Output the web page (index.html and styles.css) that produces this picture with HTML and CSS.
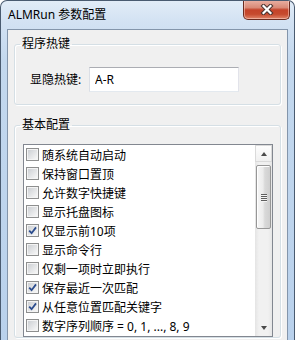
FILE: index.html
```html
<!DOCTYPE html>
<html lang="zh-CN">
<head>
<meta charset="utf-8">
<title>ALMRun 参数配置</title>
<link rel="stylesheet" href="styles.css">
</head>
<body>
<div class="window">
  <div class="titlebar">
    <span class="title">ALMRun 参数配置</span>
    <button class="close" aria-label="关闭">
      <svg width="14" height="11" viewBox="0 0 14 11">
        <path d="M3.5 2 L10.5 9 M10.5 2 L3.5 9" stroke="#4a3430" stroke-width="4.2" stroke-linecap="square" fill="none"/>
        <path d="M3.5 2 L10.5 9 M10.5 2 L3.5 9" stroke="#ffffff" stroke-width="2.2" stroke-linecap="square" fill="none"/>
      </svg>
    </button>
  </div>
  <div class="client">
    <fieldset class="group hotkey">
      <legend>程序热键</legend>
      <div class="row">
        <label class="label" for="hk">显隐热键:</label>
        <input id="hk" class="textbox" type="text" value="A-R">
      </div>
    </fieldset>
    <fieldset class="group basic">
      <legend>基本配置</legend>
      <div class="listbox">
        <ul class="items">
          <li class="item"><span class="cb"></span><span>随系统自动启动</span></li>
          <li class="item"><span class="cb"></span><span>保持窗口置顶</span></li>
          <li class="item"><span class="cb"></span><span>允许数字快捷键</span></li>
          <li class="item"><span class="cb"></span><span>显示托盘图标</span></li>
          <li class="item"><span class="cb checked"><svg width="9" height="9" viewBox="0 0 9 9"><path d="M1.2 4.6 L3.6 7.2 L8 1.4" stroke="#2c4d8e" stroke-width="1.8" fill="none"/></svg></span><span>仅显示前10项</span></li>
          <li class="item"><span class="cb"></span><span>显示命令行</span></li>
          <li class="item"><span class="cb"></span><span>仅剩一项时立即执行</span></li>
          <li class="item"><span class="cb checked"><svg width="9" height="9" viewBox="0 0 9 9"><path d="M1.2 4.6 L3.6 7.2 L8 1.4" stroke="#2c4d8e" stroke-width="1.8" fill="none"/></svg></span><span>保存最近一次匹配</span></li>
          <li class="item"><span class="cb checked"><svg width="9" height="9" viewBox="0 0 9 9"><path d="M1.2 4.6 L3.6 7.2 L8 1.4" stroke="#2c4d8e" stroke-width="1.8" fill="none"/></svg></span><span>从任意位置匹配关键字</span></li>
          <li class="item"><span class="cb"></span><span>数字序列顺序 = 0, 1, ..., 8, 9</span></li>
        </ul>
        <div class="scrollbar">
          <div class="sb-btn sb-up"><span class="arrow-up"></span></div>
          <div class="sb-thumb"><span class="grip"></span><span class="grip"></span><span class="grip"></span><span class="grip"></span></div>
          <div class="sb-btn sb-down"><span class="arrow-down"></span></div>
        </div>
      </div>
    </fieldset>
  </div>
</div>
</body>
</html>
```
FILE: styles.css
```css
html, body {
  margin: 0;
  padding: 0;
}
body {
  width: 295px;
  height: 340px;
  overflow: hidden;
  background: #ffffff;
  font-family: "Noto Sans", "Noto Sans CJK SC", sans-serif;
  font-size: 12px;
  color: #000;
}
.window {
  box-sizing: border-box;
  width: 295px;
  height: 340px;
  overflow: hidden;
  border: 1px solid #4a5b70;
  border-bottom: none;
  border-radius: 7px 7px 0 0;
  background: linear-gradient(180deg, #e2ecf7 0px, #d3e2f3 20px, #c3d8ee 60px, #b9d1ec 100%);
  padding: 0 6px;
  display: flex;
  flex-direction: column;
}
.titlebar {
  flex: none;
  height: 28px;
  display: flex;
  justify-content: space-between;
  align-items: flex-start;
}
.title {
  padding: 5px 0 0 1px;
  line-height: 18px;
  font-size: 12px;
  color: #000;
}
.close {
  box-sizing: border-box;
  width: 47px;
  height: 20px;
  margin: -1px -2px 0 0;
  padding: 0;
  border: 1px solid #6a2b20;
  border-top: none;
  border-radius: 0 0 5px 5px;
  background: linear-gradient(180deg, #eab2a5 0%, #d98a77 40%, #c4432a 52%, #c64a2e 75%, #e0856a 100%);
  box-shadow: inset 0 0 0 1px rgba(255, 220, 210, 0.5);
  display: flex;
  align-items: center;
  justify-content: center;
}
.close svg {
  display: block;
}
.client {
  flex: 1;
  min-height: 0;
  overflow: hidden;
  border: 1px solid #8395ab;
  border-bottom: none;
  background: #f0f0f0;
}
.group {
  margin: 6px 6px 0 6px;
  padding: 0;
  border: 1px solid #d5dfe5;
  border-radius: 3px;
  min-width: 0;
  box-shadow: inset 1px 1px 0 #ffffff, 1px 1px 0 #ffffff;
}
.group legend {
  margin-left: 5px;
  padding: 0 2px;
  line-height: 16px;
  font-size: 12px;
}
.basic {
  margin-top: 12px;
}
.row {
  display: flex;
  align-items: center;
  padding: 15px 0 12px 15px;
}
.label {
  width: 59px;
  flex: none;
  line-height: 16px;
}
.textbox {
  box-sizing: border-box;
  width: 150px;
  height: 25px;
  margin: 0;
  padding: 0 5px;
  border: 1px solid;
  border-color: #abadb3 #e2e3ea #e3e9ef #dbdfe6;
  background: #ffffff;
  font-family: "Noto Sans", "Noto Sans CJK SC", sans-serif;
  font-size: 12px;
  color: #000;
  outline: none;
}
.listbox {
  margin: 11px 7px 0 8px;
  height: 191px;
  border: 1px solid #828790;
  background: #ffffff;
  display: flex;
}
.items {
  flex: 1;
  margin: 0;
  padding: 0;
  list-style: none;
  overflow: hidden;
}
.item {
  height: 19px;
  display: flex;
  align-items: center;
  gap: 3px;
  padding-left: 2px;
  white-space: nowrap;
}
.cb {
  box-sizing: border-box;
  flex: none;
  width: 13px;
  height: 13px;
  border: 1px solid #8e8f8f;
  padding: 1px;
  background: linear-gradient(135deg, #cdd0d4, #f7f7f7) content-box, #f4f4f4;
  display: flex;
}
.cb svg {
  display: block;
}
.scrollbar {
  flex: none;
  width: 17px;
  display: flex;
  flex-direction: column;
  align-items: center;
  background: linear-gradient(90deg, #e4e4e4 0px, #f1f1f1 4px, #f1f1f1 13px, #e6e6e6 17px);
}
.sb-btn {
  box-sizing: border-box;
  width: 17px;
  height: 17px;
  display: flex;
  align-items: center;
  justify-content: center;
  flex: none;
}
.sb-up {
  border: 1px solid #dadada;
  background: linear-gradient(180deg, #fdfdfd, #f0f0f0);
}
.sb-down {
  margin-top: auto;
}
.arrow-up {
  width: 0;
  height: 0;
  border-left: 3.5px solid transparent;
  border-right: 3.5px solid transparent;
  border-bottom: 4px solid #4a4a4a;
}
.arrow-down {
  width: 0;
  height: 0;
  border-left: 3.5px solid transparent;
  border-right: 3.5px solid transparent;
  border-top: 4px solid #4a4a4a;
}
.sb-thumb {
  box-sizing: border-box;
  width: 15px;
  height: 64px;
  margin-top: 3px;
  border: 1px solid #979797;
  border-radius: 2px;
  background: linear-gradient(90deg, #f6f6f6 0%, #ececec 45%, #d9d9d9 60%, #cfcfcf 100%);
  box-shadow: inset 1px 1px 0 #ffffff;
  display: flex;
  flex-direction: column;
  align-items: center;
  justify-content: center;
  gap: 1px;
}
.grip {
  width: 6px;
  height: 1px;
  background: #5e5e5e;
  box-shadow: 0 1px 0 #f4f4f4;
}
```
